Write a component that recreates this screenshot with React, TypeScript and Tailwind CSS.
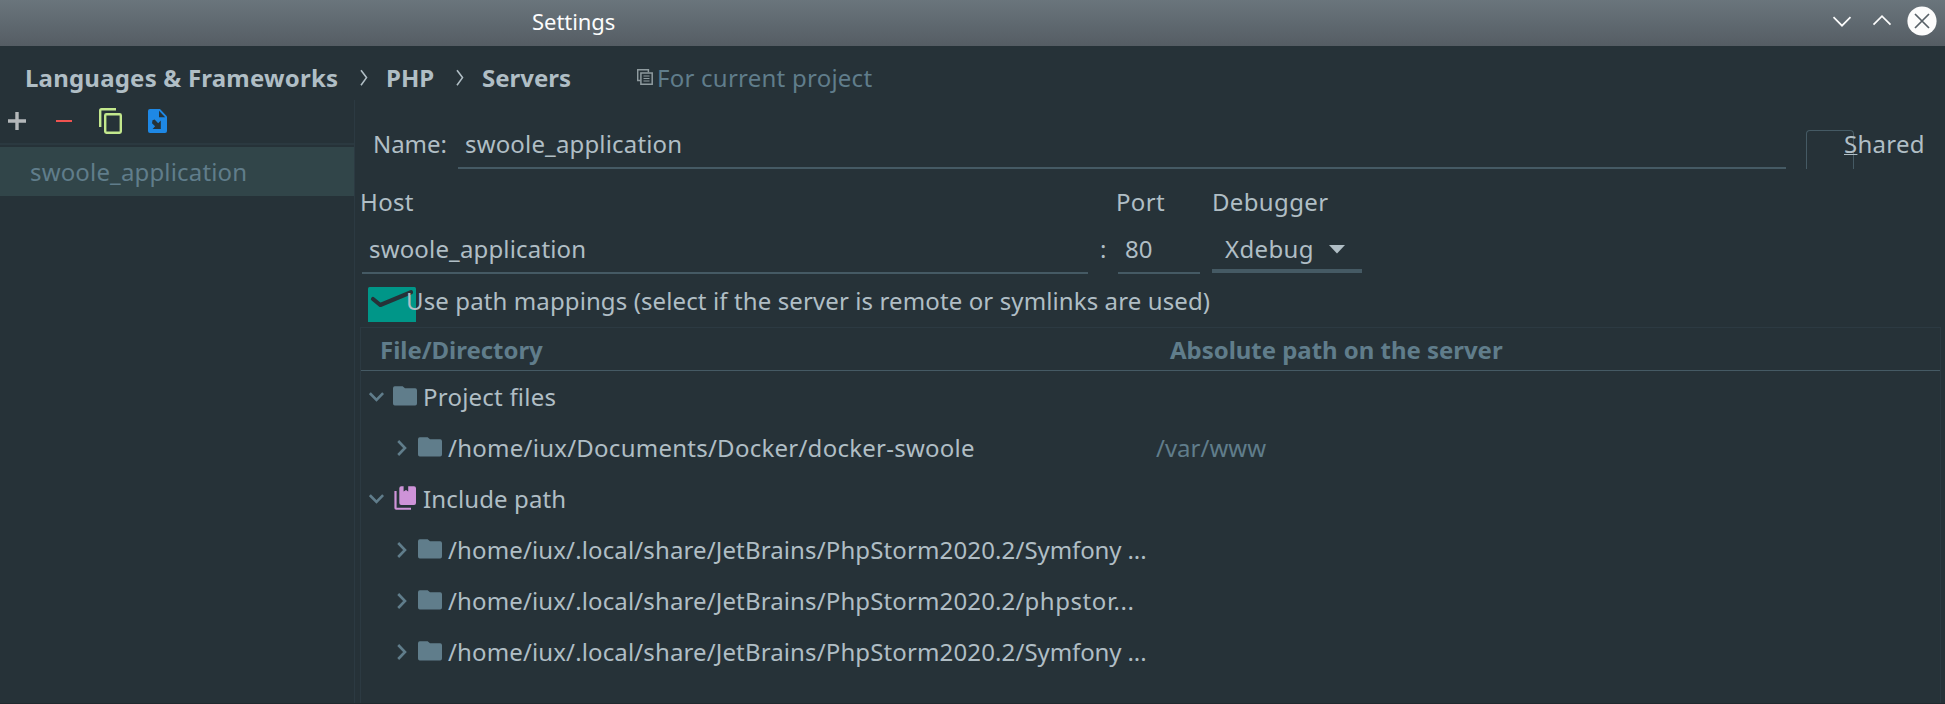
import type { ReactNode } from 'react';

type IconProps = { className?: string };

const FolderIcon = ({ className = '' }: IconProps) => (
  <svg className={className} width="24" height="20" viewBox="0 0 24 20" fill="#607d8b">
    <path d="M2.2 0.3H9.6L12 2.2H21.8A2 2 0 0 1 24 4.2V17.4A2 2 0 0 1 21.8 19.4H2.2A2 2 0 0 1 0 17.4V2.3A2 2 0 0 1 2.2 0.3Z" />
  </svg>
);

const LibraryIcon = ({ className = '' }: IconProps) => (
  <svg className={className} width="24" height="24" viewBox="0 0 24 24" fill="#ce93d8">
    <path d="M7.3 0.3H9.6V5.6L12 4L14.2 5.6V0.3H20A2 2 0 0 1 22 2.3V17A2 2 0 0 1 20 19H7.3A2 2 0 0 1 5.3 17V2.3A2 2 0 0 1 7.3 0.3Z" />
    <path d="M0.4 5H2.6V21.7H17V23.8H2.2A1.8 1.8 0 0 1 0.4 22Z" />
  </svg>
);

const ChevronDown = () => (
  <svg width="16" height="10" viewBox="0 0 16 10" fill="none" stroke="#607d8b" strokeWidth="2.6">
    <path d="M0.9 1.2L7.5 7.9L14.1 1.2" />
  </svg>
);

const ChevronRight = () => (
  <svg width="10" height="16" viewBox="0 0 10 16" fill="none" stroke="#607d8b" strokeWidth="2.6">
    <path d="M1.2 1L8 8L1.2 15" />
  </svg>
);

const CrumbArrow = ({ className = '' }: IconProps) => (
  <svg className={className} width="8" height="18" viewBox="0 0 8 18" fill="none" stroke="#b0bec5" strokeWidth="1.6">
    <path d="M1 1.2L6.5 8.6L1 16.2" />
  </svg>
);

const TitleBar = () => (
  <header className="flex h-[46px] shrink-0 items-start bg-linear-to-b from-[#6a757c] to-[#555d64] pr-2">
    <h1 className="ml-[532px] flex-1 text-[22px] leading-[42px] tracking-[-0.05px] text-[#fcfcfc]">Settings</h1>
    <svg className="mt-[16px]" width="20" height="12" viewBox="0 0 20 12" fill="none" stroke="#fcfcfc" strokeWidth="1.7">
      <path d="M1.5 1.2L10 9.7L18.5 1.2" />
    </svg>
    <svg className="mt-[14px] ml-5" width="20" height="12" viewBox="0 0 20 12" fill="none" stroke="#fcfcfc" strokeWidth="1.7">
      <path d="M1.5 10.7L10 2.2L18.5 10.7" />
    </svg>
    <svg className="mt-[6px] ml-[15px]" width="30" height="30" viewBox="0 0 30 30">
      <circle cx="15" cy="15" r="14.6" fill="#fcfcfc" />
      <path d="M8 8L22 22M22 8L8 22" stroke="#586168" strokeWidth="1.7" />
    </svg>
  </header>
);

const Breadcrumbs = () => (
  <nav className="flex h-[54px] shrink-0 items-center pt-[9px] pl-[25px] font-bold">
    <span className="w-[335px] tracking-[0.2px]">Languages &amp; Frameworks</span>
    <CrumbArrow />
    <span className="ml-[18px] w-[70px]">PHP</span>
    <CrumbArrow />
    <span className="ml-[18px] w-[155px]">Servers</span>
    <svg className="mb-px" width="16" height="16" viewBox="0 0 16 16" fill="none" stroke="#8f9b9f" strokeWidth="1.5">
      <path d="M3.5 11.4H0.7V0.7H11.4V3.2" />
      <path d="M3.9 3.9H15.2V15.2H3.9Z" />
      <path d="M6.5 7H12.5M6.5 9.5H12.5M6.5 12H12.5" strokeWidth="1.2" />
    </svg>
    <span className="ml-1 font-normal tracking-[0.24px] text-[#607d8b]">For current project</span>
  </nav>
);

const ServerList = () => (
  <aside className="flex w-[355px] shrink-0 flex-col border-r border-[#2c3a42]">
    <div className="mb-px flex h-[42px] items-center">
      <svg className="ml-2" width="18" height="18" viewBox="0 0 18 18" fill="none" stroke="#b4b8ba" strokeWidth="3.4">
        <path d="M9 0V18M0 9H18" />
      </svg>
      <svg className="ml-[30px]" width="16" height="2" viewBox="0 0 16 2">
        <rect width="16" height="2" fill="#ef5350" />
      </svg>
      <svg className="ml-[27px]" width="23" height="26" viewBox="0 0 23 26" fill="none" stroke="#c3e88d" strokeWidth="2.4">
        <path d="M1.200 19V2.500Q1.200 1.200 2.500 1.200H17" />
        <rect x="6.200" y="6.200" width="15.600" height="18.600" rx="1.200" />
      </svg>
      <svg className="ml-[26px]" width="19" height="24" viewBox="0 0 19 24">
        <path d="M2 0H12L19 7.5V22A2 2 0 0 1 17 24H2A2 2 0 0 1 0 22V2A2 2 0 0 1 2 0Z" fill="#1e88e5" />
        <path d="M11 1.8V8.3H17.2Z" fill="#263238" />
        <path d="M4.5 11.3L6.6 10.6L10.2 14.2L12.8 11.6V20H4.6L7.1 17.3L4 14.3Z" fill="#263238" />
      </svg>
    </div>
    <div className="mb-0.5 h-0.5 bg-[#2b3940]" />
    <div className="flex h-[49px] items-center bg-[#314549] pl-[30px] tracking-[0.16px] text-[#607d8b]">
      swoole_application
    </div>
  </aside>
);

const NameRow = () => (
  <div className="flex h-[69px] items-end">
    <label className="ml-[18px] w-[85px] leading-[51px] tracking-[-0.05px]">Name:</label>
    <div className="w-[1328px] border-b-2 border-[#455a64] pl-[7px] leading-[47px] tracking-[0.16px]">
      swoole_application
    </div>
    <div className="ml-5 h-[39px] w-12 shrink-0 rounded-t-sm border border-b-0 border-[#455a64]" />
    <label className="-ml-[10px] leading-[51px] tracking-[0.25px] whitespace-nowrap">
      <span className="underline decoration-1 underline-offset-1">S</span>hared
    </label>
  </div>
);

const HostRow = () => (
  <>
    <div className="mt-[13px] flex h-[39px] items-center pl-[5px] tracking-[0.35px]">
      <span className="w-[756px]">Host</span>
      <span className="w-[96px]">Port</span>
      <span>Debugger</span>
    </div>
    <div className="flex h-[53px] items-start pt-1 pl-[7px]">
      <div className="h-[49px] w-[726px] border-b-2 border-[#455a64] pl-[7px] leading-[47px] tracking-[0.16px]">
        swoole_application
      </div>
      <span className="ml-3 w-[18px] leading-[47px]">:</span>
      <div className="h-[49px] w-[82px] border-b-2 border-[#455a64] pl-[7px] leading-[47px]">80</div>
      <div className="ml-3 flex h-12 w-[150px] items-center border-b-4 border-[#455a64] pt-[3px] pl-[13px]">
        <span className="w-[104px] tracking-[0.35px]">Xdebug</span>
        <svg className="mt-0.5" width="16" height="9" viewBox="0 0 16 9" fill="#b0bec5">
          <path d="M0 0H16L8 8.6Z" />
        </svg>
      </div>
    </div>
  </>
);

const MappingToggle = () => (
  <div className="flex h-[53px] items-start pt-[13px] pl-[13px]">
    <svg className="shrink-0" width="48" height="35" viewBox="0 0 48 35">
      <path d="M0 35V1.5Q0 0 1.5 0H46.5Q48 0 48 1.5V35Z" fill="#009688" />
      <path
        d="M5 12L12.3 18L43 5.3"
        fill="none"
        stroke="#263238"
        strokeWidth="4.2"
        strokeLinecap="round"
        strokeLinejoin="round"
      />
    </svg>
    <label className="relative -ml-[10px] leading-[27px] tracking-[0.11px]">
      Use path mappings (select if the server is remote or symlinks are used)
    </label>
  </div>
);

const TreeGroup = ({ icon, label }: { icon: ReactNode; label: ReactNode }) => (
  <div className="flex h-[51px] items-center pl-2">
    <ChevronDown />
    {icon}
    {label}
  </div>
);

const TreeItem = ({ children, target }: { children: ReactNode; target?: string }) => (
  <div className="flex h-[51px] items-center pl-9">
    <ChevronRight />
    <FolderIcon className="mr-[6px] mb-px ml-[11px]" />
    <span className="w-[708px] whitespace-nowrap">{children}</span>
    {target && <span className="text-[#607d8b]">{target}</span>}
  </div>
);

const IdePath = ({ tail }: { tail: ReactNode }) => (
  <>
    <span className="tracking-[0.13px]">/home/iux/.local/share/JetBrains/PhpStorm2020.2/</span>
    {tail}
  </>
);

const MappingTable = () => (
  <div className="mr-1 ml-[5px] flex flex-1 flex-col border border-b-0 border-[#2c3a42]">
    <div className="flex h-[43px] items-center border-b border-[#455a64] pt-px pl-[19px] font-bold text-[#607d8b]">
      <span className="w-[790px] tracking-[-0.04px]">File/Directory</span>
      <span className="tracking-[-0.04px]">Absolute path on the server</span>
    </div>
    <TreeGroup
      icon={<FolderIcon className="mr-[6px] mb-px ml-2" />}
      label={<span className="tracking-[0.22px]">Project files</span>}
    />
    <TreeItem target="/var/www">
      <span className="tracking-[0.25px]">/home/iux/Documents/Docker/docker-swoole</span>
    </TreeItem>
    <TreeGroup
      icon={<LibraryIcon className="mr-[5px] mb-px ml-[9px]" />}
      label={<span className="tracking-[0.13px]">Include path</span>}
    />
    <TreeItem>
      <IdePath tail={<span className="tracking-[-0.12px]">Symfony ...</span>} />
    </TreeItem>
    <TreeItem>
      <IdePath tail={<span className="tracking-[0.56px]">phpstor...</span>} />
    </TreeItem>
    <TreeItem>
      <IdePath tail={<span className="tracking-[-0.12px]">Symfony ...</span>} />
    </TreeItem>
  </div>
);

export default function App() {
  return (
    <div className="flex h-[704px] w-[1945px] flex-col overflow-hidden border-b border-[#20292e] bg-[#263238] font-['Noto_Sans',sans-serif] text-2xl leading-[33px] text-[#b0bec5]">
      <TitleBar />
      <Breadcrumbs />
      <div className="flex flex-1">
        <ServerList />
        <main className="flex flex-1 flex-col">
          <NameRow />
          <HostRow />
          <MappingToggle />
          <MappingTable />
        </main>
      </div>
    </div>
  );
}
